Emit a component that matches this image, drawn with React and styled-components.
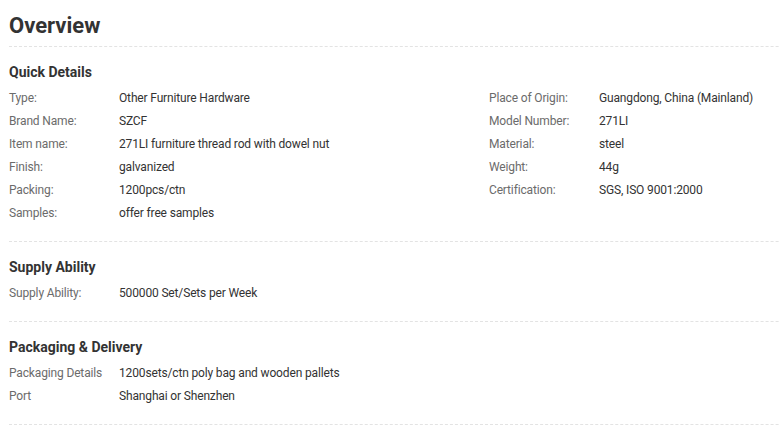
import React from "react";
import styled, { createGlobalStyle } from "styled-components";

const Global = createGlobalStyle`
  html, body { margin: 0; padding: 0; background: #fff; }
  body { font-family: Roboto, "Noto Sans", Arial, sans-serif; color: #333; overflow: hidden; }
`;

const Page = styled.div`
  width: 960px;
  padding-left: 9px;
`;

const Title = styled.h1`
  margin: 0;
  padding: 11px 0 5px;
  font-size: 22px;
  line-height: 30px;
  font-weight: 700;
  color: #333;
`;

const Section = styled.section`
  border-top: 1px dashed #e3e3e3;
  padding: 15px 0 16px;
`;

const Heading = styled.h3`
  margin: 0 0 5px;
  font-size: 14px;
  line-height: 20px;
  font-weight: 700;
  color: #333;
`;

const Columns = styled.div`
  display: grid;
  grid-template-columns: 480px 480px;
`;

const List = styled.dl`
  margin: 0;
`;

const Row = styled.div`
  display: flex;
  font-size: 12px;
  line-height: 23px;
  letter-spacing: -0.15px;
`;

const Label = styled.dt`
  width: 110px;
  flex: none;
  color: #6b6b6b;
`;

const Value = styled.dd`
  margin: 0;
  color: #333;
`;

const Pairs = ({ items }) => (
  <List>
    {items.map(([k, v]) => (
      <Row key={k}>
        <Label>{k}</Label>
        <Value>{v}</Value>
      </Row>
    ))}
  </List>
);

const left = [
  ["Type:", "Other Furniture Hardware"],
  ["Brand Name:", "SZCF"],
  ["Item name:", "271LI furniture thread rod with dowel nut"],
  ["Finish:", "galvanized"],
  ["Packing:", "1200pcs/ctn"],
  ["Samples:", "offer free samples"],
];
const right = [
  ["Place of Origin:", "Guangdong, China (Mainland)"],
  ["Model Number:", "271LI"],
  ["Material:", "steel"],
  ["Weight:", "44g"],
  ["Certification:", "SGS, ISO 9001:2000"],
];

export default function App() {
  return (
    <Page>
      <Global />
      <Title>Overview</Title>
      <Section>
        <Heading>Quick Details</Heading>
        <Columns>
          <Pairs items={left} />
          <Pairs items={right} />
        </Columns>
      </Section>
      <Section>
        <Heading>Supply Ability</Heading>
        <Pairs items={[["Supply Ability:", "500000 Set/Sets per Week"]]} />
      </Section>
      <Section>
        <Heading>Packaging &amp; Delivery</Heading>
        <Pairs
          items={[
            ["Packaging Details", "1200sets/ctn poly bag and wooden pallets"],
            ["Port", "Shanghai or Shenzhen"],
          ]}
        />
      </Section>
      <Section />
    </Page>
  );
}
